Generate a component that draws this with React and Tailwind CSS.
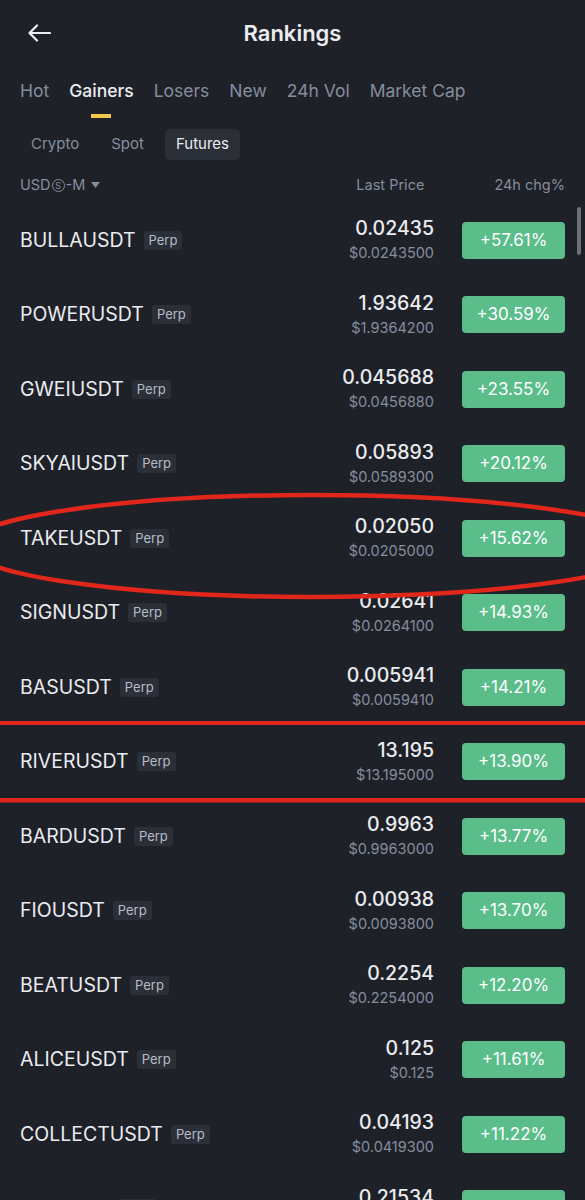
import React from 'react';

const rows = [
  { sym: 'BULLAUSDT', price: '0.02435', usd: '$0.0243500', chg: '+57.61%' },
  { sym: 'POWERUSDT', price: '1.93642', usd: '$1.9364200', chg: '+30.59%' },
  { sym: 'GWEIUSDT', price: '0.045688', usd: '$0.0456880', chg: '+23.55%' },
  { sym: 'SKYAIUSDT', price: '0.05893', usd: '$0.0589300', chg: '+20.12%' },
  { sym: 'TAKEUSDT', price: '0.02050', usd: '$0.0205000', chg: '+15.62%' },
  { sym: 'SIGNUSDT', price: '0.02641', usd: '$0.0264100', chg: '+14.93%' },
  { sym: 'BASUSDT', price: '0.005941', usd: '$0.0059410', chg: '+14.21%' },
  { sym: 'RIVERUSDT', price: '13.195', usd: '$13.195000', chg: '+13.90%' },
  { sym: 'BARDUSDT', price: '0.9963', usd: '$0.9963000', chg: '+13.77%' },
  { sym: 'FIOUSDT', price: '0.00938', usd: '$0.0093800', chg: '+13.70%' },
  { sym: 'BEATUSDT', price: '0.2254', usd: '$0.2254000', chg: '+12.20%' },
  { sym: 'ALICEUSDT', price: '0.125', usd: '$0.125', chg: '+11.61%' },
  { sym: 'COLLECTUSDT', price: '0.04193', usd: '$0.0419300', chg: '+11.22%' },
  { sym: 'ZKJUSDT', price: '0.21534', usd: '$0.2153400', chg: '+10.95%' },
];

const tabs = ['Hot', 'Gainers', 'Losers', 'New', '24h Vol', 'Market Cap'];
const markets = ['Crypto', 'Spot', 'Futures'];

function Row({ r }) {
  return (
    <div className="h-[74.5px] flex items-center pl-5 pr-5">
      <div className="flex items-center flex-1 min-w-0">
        <span className="text-[19.5px] font-normal text-[#eaecef]">{r.sym}</span>
        <span className="ml-[8px] h-[19px] px-[5px] rounded-[3px] bg-[#2b2f37] text-[13px] leading-[19px] text-[#b7bdc6]">Perp</span>
      </div>
      <div className="flex flex-col items-end gap-[4px] mr-[28px]">
        <span className="text-[19.5px] leading-[22px] font-medium text-[#eaecef]">{r.price}</span>
        <span className="text-[14.5px] leading-[20px] text-[#848e9c]">{r.usd}</span>
      </div>
      <div className="w-[103px] h-[37px] rounded-[4px] bg-[#5abd8a] flex items-center justify-center text-[17px] font-normal text-white">
        {r.chg}
      </div>
    </div>
  );
}

export default function App() {
  return (
    <div className="w-[585px] h-[1200px] overflow-hidden bg-[#1f2129] relative font-['Inter',sans-serif]">
      {/* top bar */}
      <div className="h-[66px] grid grid-cols-[80px_1fr_80px] items-center">
        <div className="pl-[28px]">
          <svg width="23" height="18" viewBox="0 0 23 18" fill="none" stroke="#eaecef" strokeWidth="2.2" strokeLinecap="round" strokeLinejoin="round">
            <path d="M22 9H2M9 1.5L1.5 9L9 16.5" />
          </svg>
        </div>
        <div className="text-center text-[22px] font-semibold text-[#eaecef]">Rankings</div>
        <div />
      </div>

      {/* tabs */}
      <div className="flex gap-5 px-5 pt-[13px]">
        {tabs.map(t => (
          <div key={t} className="flex flex-col items-center">
            <span className={t === 'Gainers' ? 'text-[17.5px] leading-[24px] font-medium text-[#eaecef]' : 'text-[17.5px] leading-[24px] font-normal text-[#848e9c]'}>{t}</span>
            <span className={t === 'Gainers' ? 'mt-[11px] w-[20px] h-[4px] bg-[#f0c94a]' : 'mt-[11px] w-[20px] h-[4px]'} />
          </div>
        ))}
      </div>

      {/* market type */}
      <div className="flex gap-[10px] px-5 mt-[11px]">
        {markets.map(m => (
          <div key={m} className={m === 'Futures' ? 'h-[31px] px-[11px] rounded-[5px] bg-[#2b2f37] flex items-center text-[15px] text-[#eaecef]' : 'h-[31px] px-[11px] rounded-[5px] flex items-center text-[15px] text-[#848e9c]'}>
            {m}
          </div>
        ))}
      </div>

      {/* column header */}
      <div className="h-[30px] mt-[10px] flex items-center px-5 text-[14.5px] text-[#848e9c]">
        <div className="flex items-center flex-1">
          <span>USD</span>
          <span className="mx-[1px] w-[13px] h-[13px] rounded-full border border-[#848e9c] flex items-center justify-center text-[9px] leading-none">S</span>
          <span>-M</span>
          <svg className="ml-[6px]" width="9" height="6" viewBox="0 0 9 6"><path d="M0 0H9L4.5 6Z" fill="#848e9c" /></svg>
        </div>
        <span className="mr-[70px]">Last Price</span>
        <span>24h chg%</span>
      </div>

      {/* list */}
      <div className="mt-[3px]">
        {rows.map(r => <Row key={r.sym} r={r} />)}
      </div>

      {/* scrollbar */}
      <div className="absolute left-[577px] top-[207px] w-[4px] h-[48px] rounded-full bg-[#6b7079]" />

      {/* red annotations */}
      <svg className="absolute inset-0 pointer-events-none" width="585" height="1200" viewBox="0 0 585 1200">
        <ellipse cx="312" cy="546" rx="345" ry="51" fill="none" stroke="#e1261c" strokeWidth="4.5" />
        <rect x="0" y="721" width="585" height="4" fill="#e1261c" />
        <rect x="0" y="798" width="585" height="4.5" fill="#e1261c" />
      </svg>
    </div>
  );
}
